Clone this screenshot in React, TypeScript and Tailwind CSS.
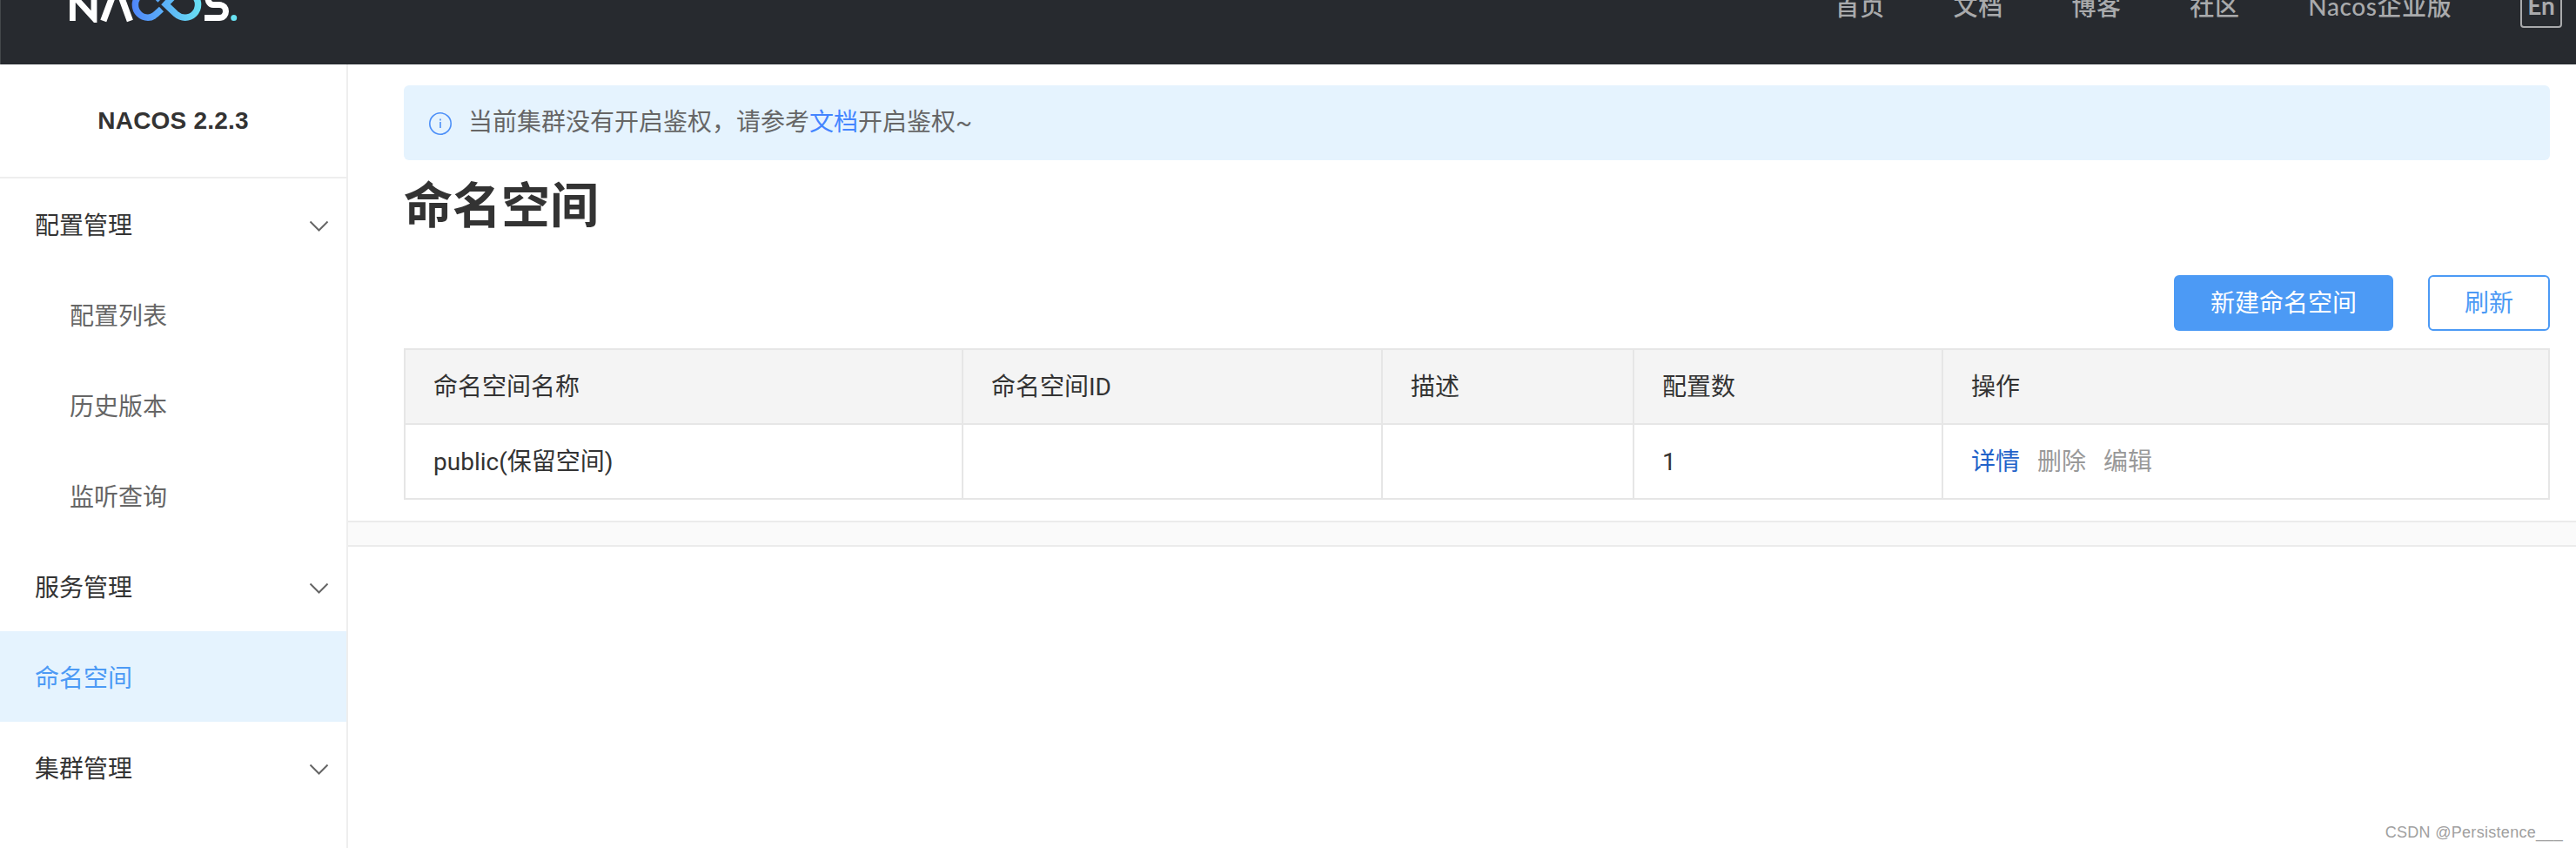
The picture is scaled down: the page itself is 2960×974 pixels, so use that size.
const navItems = ["首页", "文档", "博客", "社区", "Nacos企业版"];

type MenuItem = {
  label: string;
  level?: "child";
  expandable?: boolean;
  active?: boolean;
};

const menu: MenuItem[] = [
  { label: "配置管理", expandable: true },
  { label: "配置列表", level: "child" },
  { label: "历史版本", level: "child" },
  { label: "监听查询", level: "child" },
  { label: "服务管理", expandable: true },
  { label: "命名空间", active: true },
  { label: "集群管理", expandable: true },
];

const columns = ["命名空间名称", "命名空间ID", "描述", "配置数", "操作"];

const rows = [{ name: "public(保留空间)", id: "", desc: "", count: 1 }];

function Logo() {
  return (
    <svg width="196" height="26" viewBox="0 0 196 26" fill="none">
      <defs>
        <linearGradient id="loop" x1="72" y1="0" x2="152" y2="0" gradientUnits="userSpaceOnUse">
          <stop stopColor="#4f86fb" />
          <stop offset="1" stopColor="#69e2f3" />
        </linearGradient>
      </defs>
      <path d="M3.4 24V-6L28 21V-8" stroke="#fff" strokeWidth="6.8" />
      <path d="M38.8 24L51.5-10M57-10L69.4 24" stroke="#fff" strokeWidth="7.4" />
      <path d="M104 0C99-5 96-9 90-9A14.6 14.6 0 0 0 90 20.2C95.5 20.2 98 17.5 105.5 10.5" stroke="url(#loop)" strokeWidth="7.5" />
      <path d="M120-5L110.5 5L122 16C126 19.5 129 20.2 132.7 20.2A14.8 14.8 0 0 0 132.7-9.5" stroke="url(#loop)" strokeWidth="7.5" />
      <path d="M178-10H165C157-10 157 5.5 165 5.5H172C182 5.5 182 20.5 172 20.5H155" stroke="#fff" strokeWidth="7" />
      <circle cx="188.7" cy="20.5" r="3.5" fill="#69e2f3" />
    </svg>
  );
}

function Header() {
  return (
    <header className="flex h-[74px] items-start justify-between overflow-hidden border-l border-[#43474a] bg-[#272a2f] pr-4 pl-[79px]">
      <Logo />
      <nav className="-mt-[14px] flex h-[46px] items-start gap-[78.7px] font-['Lato','Noto_Sans_CJK_SC',sans-serif] text-[28px] leading-[42px] tracking-[0.6px] text-[#a9aaac]">
        {navItems.map((item) => (
          <a key={item} className="font-medium whitespace-nowrap">
            {item}
          </a>
        ))}
        <span className="flex h-[46px] w-12 items-start justify-center rounded border-2 border-[#a9aaac] leading-[37px] font-bold tracking-normal">
          En
        </span>
      </nav>
    </header>
  );
}

function Sidebar() {
  return (
    <aside className="w-[400px] shrink-0 border-r-2 border-[#eee]">
      <h1 className="flex h-[131px] items-center justify-center border-b-2 border-[#eee] pt-px font-['Liberation_Sans',sans-serif] text-[28px] font-bold tracking-[0.2px]">
        NACOS 2.2.3
      </h1>
      <ul>
        {menu.map((item) => (
          <li
            key={item.label}
            className={`flex h-[104px] items-center justify-between pt-[5px] pr-5 ${
              item.level === "child" ? "pl-20 text-[#666]" : "pl-10"
            } ${item.active ? "bg-[#e5f3fe] text-[#4c9af5]" : ""}`}
          >
            {item.label}
            {item.expandable && (
              <svg width="23" height="14" viewBox="0 0 23 14" fill="none" stroke="#666" strokeWidth="2">
                <path d="M1.5 1.5L11.5 11.5L21.5 1.5" />
              </svg>
            )}
          </li>
        ))}
      </ul>
    </aside>
  );
}

function AuthNotice() {
  return (
    <div className="flex h-[86px] items-center rounded-md bg-[#e5f3fe] pl-7 text-[#666]">
      <svg width="28" height="28" viewBox="0 0 28 28" fill="none" stroke="#4c8ff8" strokeWidth="1.6">
        <circle cx="14" cy="15" r="12.2" />
        <path d="M14 13V20M14 9.5V11.5" />
      </svg>
      <p className="ml-[18px]">
        当前集群没有开启鉴权，请参考<a className="text-[#4485ff]">文档</a>开启鉴权~
      </p>
    </div>
  );
}

function NamespaceTable() {
  return (
    <table className="mt-5 w-full table-fixed border-collapse text-left">
      <colgroup>
        <col className="w-[641px]" />
        <col className="w-[482px]" />
        <col className="w-[289px]" />
        <col className="w-[355px]" />
        <col />
      </colgroup>
      <thead>
        <tr className="h-[86px] bg-[#f4f4f4]">
          {columns.map((title) => (
            <th key={title} className="border-2 border-[#e6e6e6] px-8 pt-0.5 font-normal">
              {title}
            </th>
          ))}
        </tr>
      </thead>
      <tbody>
        {rows.map((row) => (
          <tr key={row.name} className="h-[86px]">
            <td className="border-2 border-[#e6e6e6] px-8 pt-0.5">{row.name}</td>
            <td className="border-2 border-[#e6e6e6] px-8 pt-0.5">{row.id}</td>
            <td className="border-2 border-[#e6e6e6] px-8 pt-0.5">{row.desc}</td>
            <td className="border-2 border-[#e6e6e6] px-8 pt-0.5">{row.count}</td>
            <td className="border-2 border-[#e6e6e6] px-8 pt-0.5">
              <div className="flex gap-5 text-[#999]">
                <a className="text-[#2262c9]">详情</a>
                <span>删除</span>
                <span>编辑</span>
              </div>
            </td>
          </tr>
        ))}
      </tbody>
    </table>
  );
}

export default function App() {
  return (
    <div className="flex h-[974px] flex-col overflow-hidden bg-white font-['Roboto','Noto_Sans_CJK_SC',sans-serif] text-[28px] leading-[40px] text-[#333]">
      <Header />
      <div className="flex flex-1">
        <Sidebar />
        <main className="flex flex-1 flex-col">
          <section className="h-[524px] pt-6 pr-[30px] pl-16">
            <AuthNotice />
            <h2 className="mt-[11px] flex h-[84px] items-center text-[56px] font-bold">命名空间</h2>
            <div className="mt-[37px] flex justify-end gap-10">
              <button className="h-16 w-[252px] rounded-md bg-[#4c9af5] pt-0.5 text-white">新建命名空间</button>
              <button className="h-16 w-[140px] rounded-md border-2 border-[#4c9af5] pt-0.5 text-[#4c9af5]">刷新</button>
            </div>
            <NamespaceTable />
          </section>
          <div className="h-[30px] border-y-2 border-[#ebebeb] bg-[#fafafa]" />
          <footer className="mt-auto flex h-9 items-center justify-end pr-[15px] font-['Liberation_Sans',sans-serif] text-[18px] tracking-[0.3px] text-[#a0a0a0]">
            CSDN @Persistence___
          </footer>
        </main>
      </div>
    </div>
  );
}
